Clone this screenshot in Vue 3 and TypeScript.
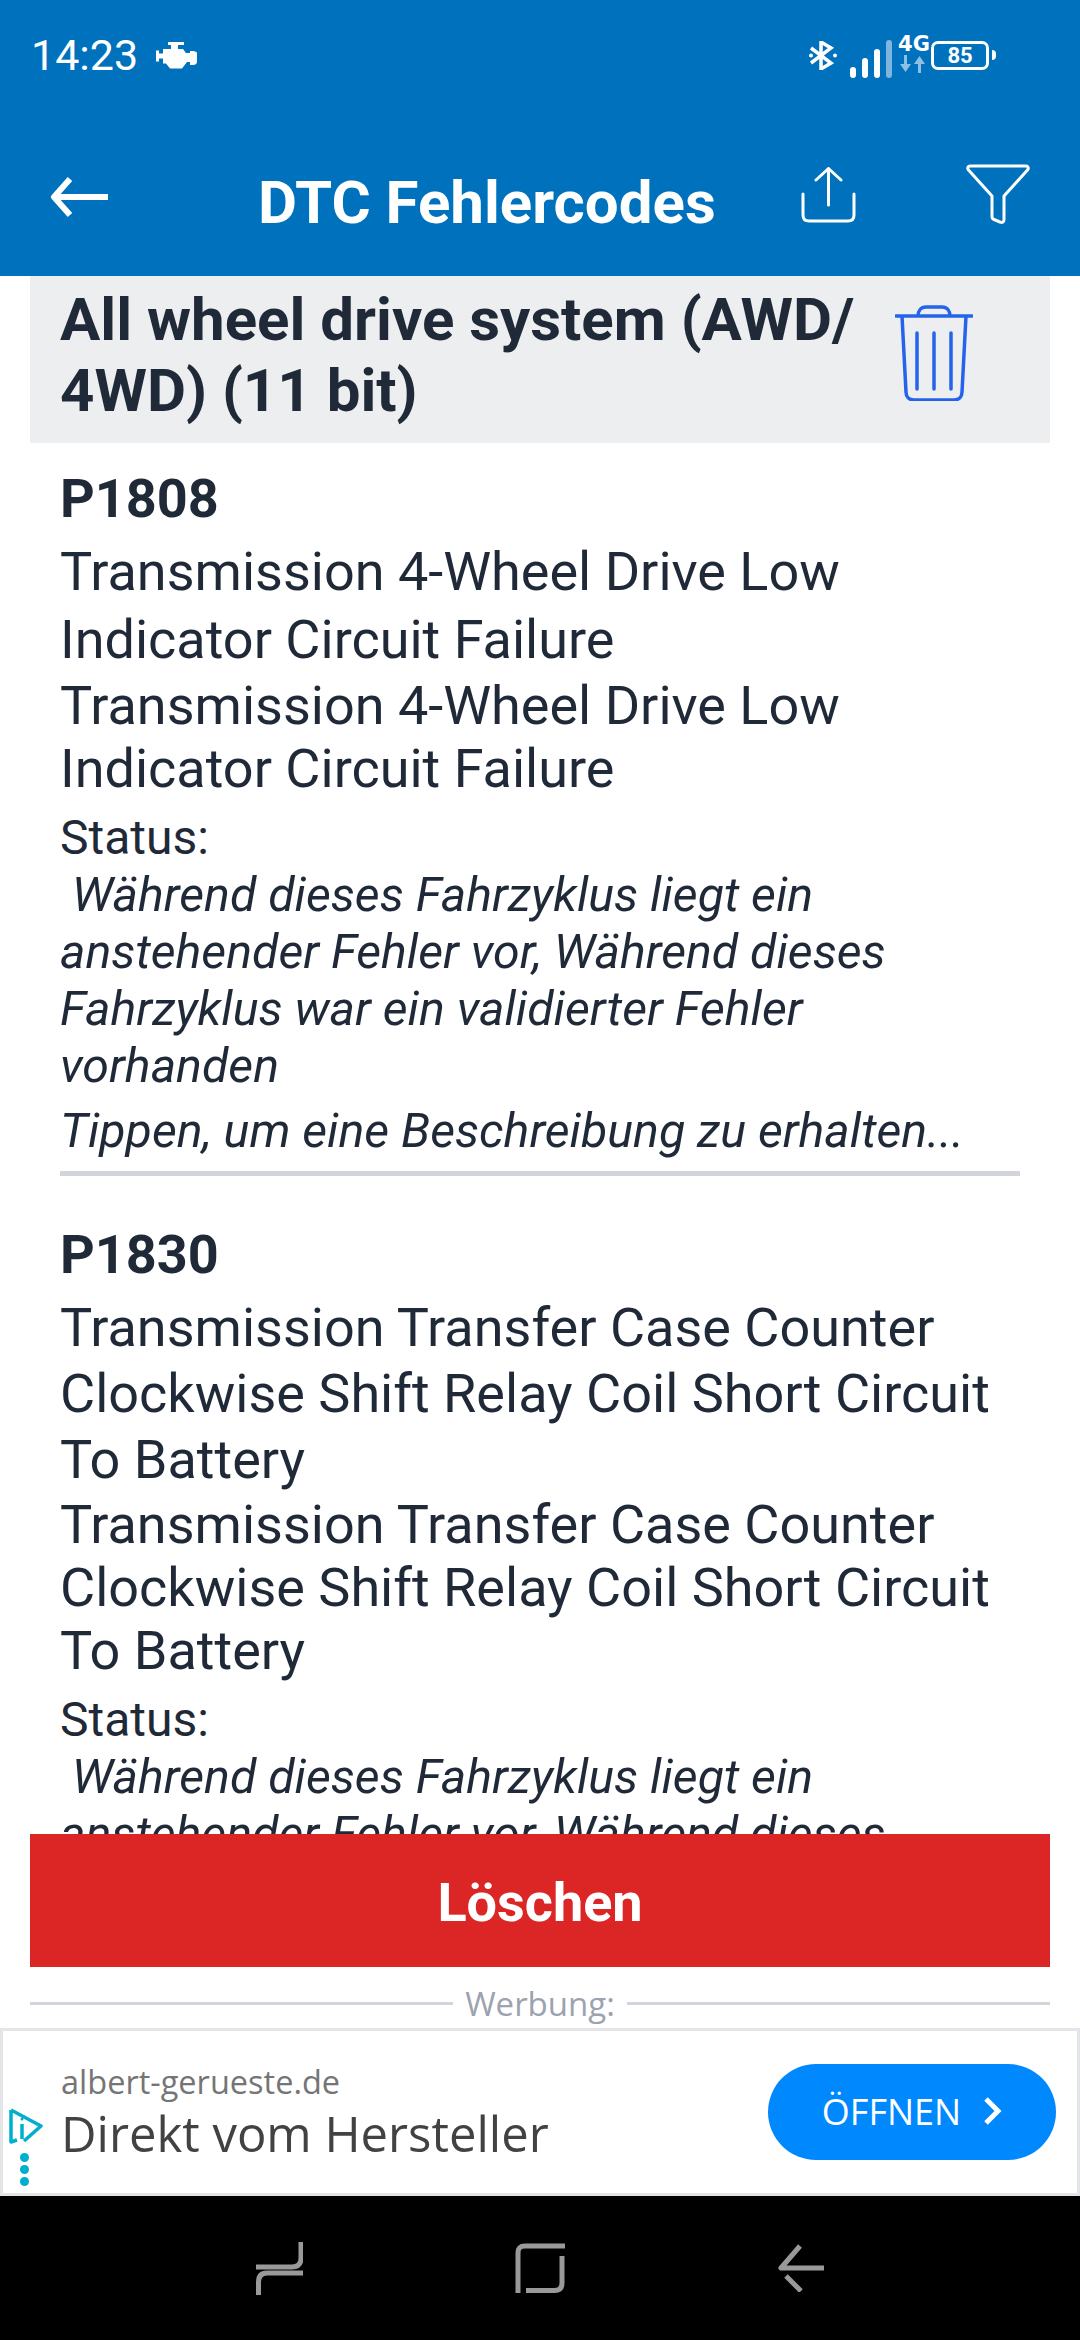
<template>
  <div class="screen">
    <header class="top">
      <div class="status">
        <div class="status-left">
          <span class="time">14:23</span>
          <svg class="engine" width="41" height="27" viewBox="0 0 41 27">
            <path d="M12 0h16v3h-6v4h5l3 4h4v-2h3c2 0 4 1 4 2v9c0 2-2 3-4 3h-3v-3h-3l-5 6.500H14l-4-5H7v-5H3v3H0v-11h3v3h4V7h8V3h-3z" fill="#fff" />
          </svg>
        </div>
        <div class="status-right">
          <svg width="28" height="29" viewBox="0 0 28 29" fill="none" stroke="#fff" stroke-width="3.500">
            <path d="M2 7l20 15-10 6V1l10 6L2 22" />
            <circle cx="2" cy="14.500" r="2" fill="#fff" stroke="none" />
            <circle cx="26" cy="14.500" r="2" fill="#fff" stroke="none" />
          </svg>
          <div class="bars">
            <i class="bar bar1"></i><i class="bar bar2"></i><i class="bar bar3"></i><i class="bar bar4"></i>
          </div>
          <div class="net">
            <span class="net-label">4G</span>
            <svg width="28" height="18" viewBox="0 0 28 18" fill="#8fc0e3">
              <path d="M4 0h3v9h4l-5.500 8L0 9h4zM21 18h-3V9h-4l5.500-8L25 9h-4z" />
            </svg>
          </div>
          <div class="battery"><span>85</span></div>
          <i class="battery-nub"></i>
        </div>
      </div>
      <div class="toolbar">
        <svg class="back" width="58" height="40" viewBox="0 0 58 40" fill="none" stroke="#fff" stroke-width="6">
          <path d="M20 2L4 20l16 18M4 20h54" stroke-linejoin="round" />
        </svg>
        <h1 class="title">DTC Fehlercodes</h1>
        <svg class="share" width="55" height="56" viewBox="0 0 55 56" fill="none" stroke="#fff" stroke-width="3" stroke-linecap="round" stroke-linejoin="round">
          <path d="M27.500 38V2M15 13L27.500 1.500 40 13M2 27v21c0 4 2 6 6 6h39c4 0 6-2 6-6V27" />
        </svg>
        <svg class="filter" width="64" height="60" viewBox="0 0 64 60" fill="none" stroke="#fff" stroke-width="3" stroke-linejoin="round">
          <path d="M4 2h56c2 0 3 2 1.500 4L38 32v24c0 2-2 3-4 2l-6-2.500c-1.500-.5-2-1.500-2-3V32L2.500 6C1 4 2 2 4 2z" />
        </svg>
      </div>
    </header>

    <main class="scroller">
      <div class="section">
        <h2 class="section-title">All wheel drive system (AWD/ 4WD) (11 bit)</h2>
        <svg class="trash" width="78" height="96" viewBox="0 0 78 96" fill="none" stroke="#2563eb" stroke-width="3.500" stroke-linecap="round" stroke-linejoin="round">
          <path d="M1 11h76M23 11c0-5 3-9 8-9h16c5 0 8 4 8 9M7 11l4 76c0 5 3 8 8 8h40c5 0 8-3 8-8l4-76M22 28v56M39 28v56M56 28v56" />
        </svg>
      </div>

      <article v-for="(item, index) in codes" :key="item.code" class="code" :class="{ first: index === 0 }">
        <div class="code-id">{{ item.code }}</div>
        <p class="code-name">{{ item.name }}</p>
        <p class="code-desc">{{ item.name }}</p>
        <div class="status-label">Status:</div>
        <p class="status-text">&nbsp;{{ statusText }}</p>
        <p class="hint">Tippen, um eine Beschreibung zu erhalten...</p>
      </article>
    </main>

    <button class="delete">Löschen</button>

    <div class="ad-label"><span>Werbung:</span></div>

    <aside class="ad">
      <svg class="ad-info" width="34" height="36" viewBox="0 0 34 36" fill="none" stroke="#00aecd" stroke-width="3.500" stroke-linejoin="round">
        <path d="M2 2l30 16-17 15M2 2v32l6-2" />
        <path d="M13 16v15" />
        <circle cx="13" cy="11" r="1.500" fill="#00aecd" stroke="none" />
      </svg>
      <div class="ad-dots"><i></i><i></i><i></i></div>
      <div class="ad-copy">
        <div class="ad-domain">albert-gerueste.de</div>
        <div class="ad-headline">Direkt vom Hersteller</div>
      </div>
      <div class="ad-open">
        ÖFFNEN
        <svg width="19" height="28" viewBox="0 0 19 28" fill="none" stroke="#fff" stroke-width="5">
          <path d="M3 2l12 12L3 26" />
        </svg>
      </div>
    </aside>

    <nav class="nav">
      <svg width="47" height="53" viewBox="0 0 47 53" fill="none" stroke="#999" stroke-width="5">
        <path d="M45 0v16c0 6-3 9-9 9H0M47 31H11c-6 0-8.500 3-8.500 9v13" />
      </svg>
      <svg width="50" height="50" viewBox="0 0 50 50" fill="none" stroke="#999" stroke-width="5">
        <path d="M50 3H10C5 3 3 5 3 10v40M47 13v27c0 5-2 7.500-7 7.500H11" />
      </svg>
      <svg width="47" height="48" viewBox="0 0 47 48" fill="none" stroke="#999" stroke-width="5">
        <path d="M23 2L4 24h43M9 32l15 15" stroke-linejoin="round" />
      </svg>
    </nav>
  </div>
</template>

<script setup lang="ts">
interface DtcCode {
  code: string
  name: string
}

const statusText =
  'Während dieses Fahrzyklus liegt ein anstehender Fehler vor, Während dieses Fahrzyklus war ein validierter Fehler vorhanden'

const codes: DtcCode[] = [
  { code: 'P1808', name: 'Transmission 4-Wheel Drive Low Indicator Circuit Failure' },
  { code: 'P1830', name: 'Transmission Transfer Case Counter Clockwise Shift Relay Coil Short Circuit To Battery' },
]
</script>

<style>
html,
body {
  margin: 0;
  background: #fff;
}
</style>

<style scoped>
.screen {
  width: 1080px;
  height: 2340px;
  display: flex;
  flex-direction: column;
  font-family: Roboto, "Liberation Sans", sans-serif;
  color: #1f2937;
  background: #fff;
  overflow: hidden;
}

.top {
  height: 276px;
  flex: none;
  background: #0071bc;
  color: #fff;
}

.status {
  height: 110px;
  padding: 0 84px 0 31px;
  display: flex;
  justify-content: space-between;
  align-items: center;
}

.status-left {
  display: flex;
  align-items: center;
  gap: 18px;
}

.time {
  font-size: 43px;
  line-height: 43px;
}

.status-right {
  display: flex;
  align-items: center;
  position: relative;
}

.bars {
  display: flex;
  align-items: flex-end;
  gap: 6px;
  margin-left: 13px;
  height: 38px;
  padding-top: 8px;
}

.bar {
  display: block;
  width: 6px;
  border-radius: 3px;
  background: #fff;
}

.bar1 { height: 11px; }
.bar2 { height: 20px; }
.bar3 { height: 29px; }
.bar4 { height: 38px; background: #7fb6dd; }

.net {
  margin: -4px 0 0 8px;
  width: 28px;
  display: flex;
  flex-direction: column;
  align-items: center;
}

.net-label {
  font-family: "DejaVu Sans", sans-serif;
  font-size: 21px;
  line-height: 22px;
  font-weight: 700;
}

.battery {
  margin-left: 3px;
  width: 58px;
  height: 29px;
  box-sizing: border-box;
  border: 3.500px solid #fff;
  border-radius: 7px;
  display: flex;
  align-items: center;
  justify-content: center;
  font-size: 22px;
  font-weight: 700;
}

.battery-nub {
  display: block;
  margin-left: 3px;
  width: 4px;
  height: 10px;
  background: #fff;
  border-radius: 0 5px 5px 0;
}

.toolbar {
  height: 166px;
  position: relative;
  display: flex;
  align-items: center;
  padding: 0 52px 0 50px;
}

.back {
  margin-top: 7px;
}

.title {
  margin: 0 0 0 150px;
  font-size: 60px;
  line-height: 66px;
  font-weight: 700;
  white-space: nowrap;
  flex: 1;
  position: relative;
  top: 10px;
}

.share {
  margin-top: 3px;
  margin-right: 110px;
}

.filter {
  margin-top: 1px;
  margin-right: -2px;
}

.scroller {
  flex: 1;
  min-height: 0;
  overflow: hidden;
}

.section {
  margin: 0 30px;
  height: 167px;
  box-sizing: border-box;
  padding: 8px 77px 0 30px;
  background: #edeef0;
  display: flex;
  justify-content: space-between;
  align-items: flex-start;
}

.section-title {
  margin: 0;
  width: 810px;
  font-size: 60px;
  line-height: 71px;
  font-weight: 700;
}

.trash {
  margin-top: 21px;
}

.code {
  padding: 46px 60px 0;
}

.code.first {
  padding: 23px 60px 17px;
  position: relative;
}

.code.first::after {
  content: "";
  position: absolute;
  left: 60px;
  right: 60px;
  bottom: 0;
  height: 5px;
  background: #d1d5db;
}

.code-id {
  font-size: 54px;
  line-height: 66px;
  font-weight: 700;
}

.code-name,
.code-desc {
  margin: 0;
  font-size: 54px;
  line-height: 66px;
}

.code-name {
  margin-top: 7px;
}

.first .code-name {
  margin-top: 6px;
  line-height: 68px;
}

.code-desc {
  line-height: 63px;
}

.status-label {
  margin-top: 10px;
  font-size: 48px;
  line-height: 56px;
}

.status-text,
.hint {
  margin: 0;
  font-size: 48.250px;
  line-height: 57px;
  font-style: italic;
}

.hint {
  margin-top: 8px;
  white-space: nowrap;
}

.delete {
  flex: none;
  margin: 0 30px;
  height: 133px;
  padding: 3px 0 0;
  border: none;
  background: #dc2626;
  color: #fff;
  font-family: inherit;
  font-size: 54px;
  font-weight: 700;
}

.ad-label {
  flex: none;
  height: 61px;
  box-sizing: border-box;
  padding-top: 12px;
  margin: 0 30px;
  display: flex;
  align-items: center;
  gap: 12px;
  color: #9ca3af;
  font-family: "Open Sans", sans-serif;
  font-size: 33px;
  line-height: 44px;
}

.ad-label::before,
.ad-label::after {
  content: "";
  flex: 1;
  height: 3px;
  background: #d1d5db;
}

.ad {
  flex: none;
  height: 168px;
  box-sizing: border-box;
  border: 3px solid #e4e5e9;
  position: relative;
  display: flex;
  align-items: center;
  justify-content: space-between;
  padding: 0 21px 0 58px;
  font-family: "Open Sans", sans-serif;
}

.ad-info {
  position: absolute;
  left: 6px;
  top: 77px;
}

.ad-dots {
  position: absolute;
  left: 17px;
  top: 122px;
  display: flex;
  flex-direction: column;
  gap: 3px;
}

.ad-dots i {
  display: block;
  width: 9px;
  height: 9px;
  border-radius: 50%;
  background: #00aecd;
}

.ad-domain {
  font-size: 32.500px;
  line-height: 42px;
  color: #757575;
}

.ad-headline {
  font-size: 49px;
  line-height: 60px;
  color: #424242;
}

.ad-open {
  width: 288px;
  height: 96px;
  padding-bottom: 2px;
  box-sizing: border-box;
  border-radius: 48px;
  background: #0088ff;
  color: #fff;
  font-size: 36px;
  display: flex;
  align-items: center;
  justify-content: center;
  gap: 22px;
}

.nav {
  flex: none;
  height: 144px;
  background: #000;
  display: flex;
  align-items: center;
  justify-content: center;
  gap: 212px;
}
</style>
